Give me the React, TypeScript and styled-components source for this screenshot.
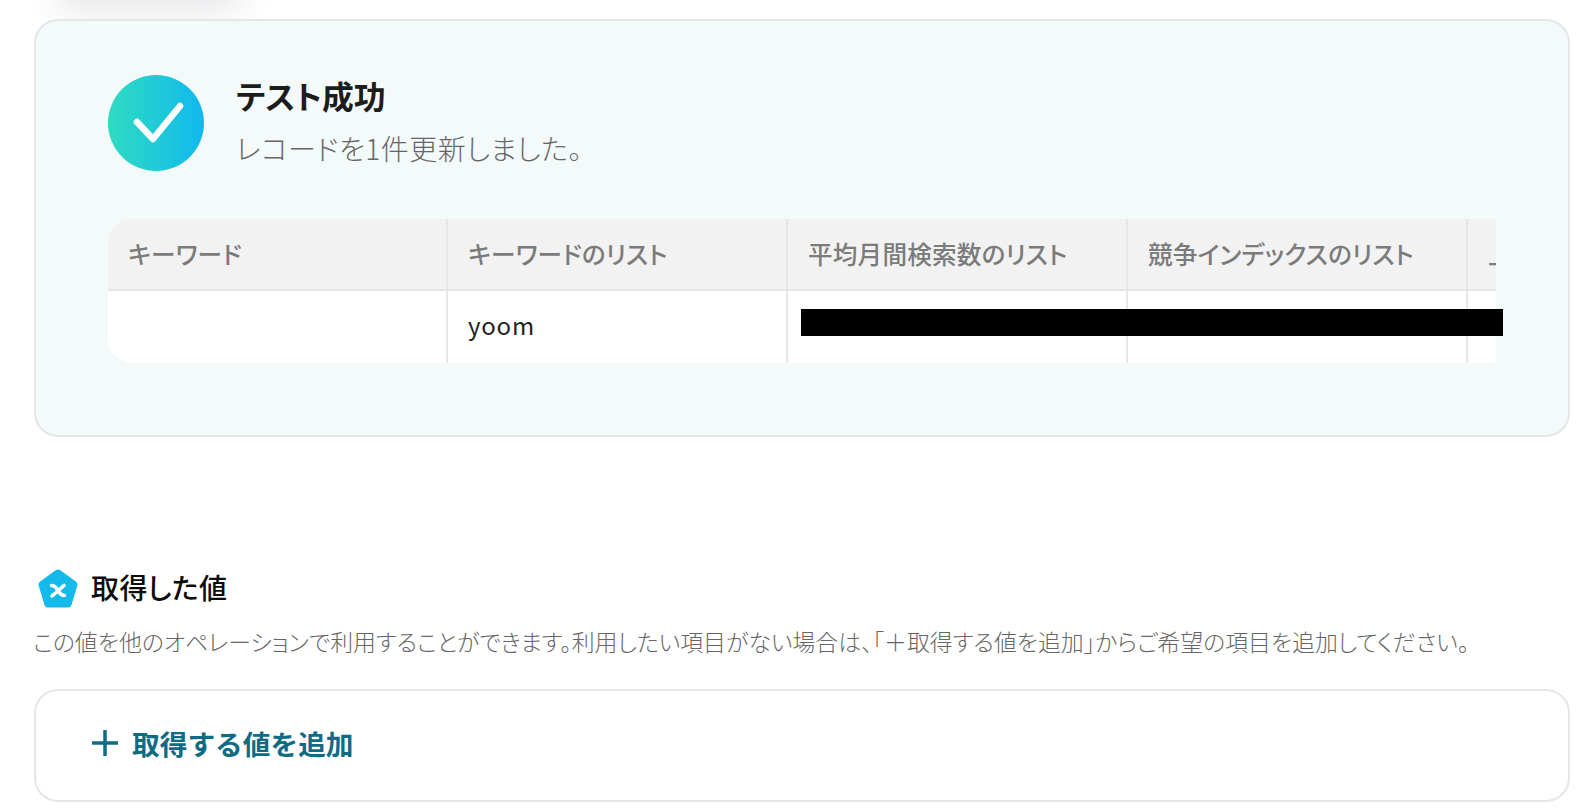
import { createGlobalStyle } from 'styled-components'
import styled from 'styled-components'

const GlobalStyle = createGlobalStyle`
  html, body {
    margin: 0;
    padding: 0;
    background: #ffffff;
  }
  body {
    font-family: "Noto Sans CJK JP", "Noto Sans", sans-serif;
    overflow: hidden;
  }
`

const columns = [
  { title: 'キーワード', value: '' },
  { title: 'キーワードのリスト', value: 'yoom' },
  { title: '平均月間検索数のリスト', value: '' },
  { title: '競争インデックスのリスト', value: '' },
  { title: '上', value: '' },
]

function CheckBadge() {
  return (
    <svg width="96" height="96" viewBox="0 0 96 96">
      <defs>
        <linearGradient id="badge" x1="0" y1="0" x2="1" y2="0">
          <stop offset="0" stopColor="#2fdcc0" />
          <stop offset="1" stopColor="#10b9ee" />
        </linearGradient>
      </defs>
      <circle cx="48" cy="48" r="48" fill="url(#badge)" />
      <path
        d="M29 47 L45 64 L72 31"
        fill="none"
        stroke="#fff"
        strokeWidth="6.5"
        strokeLinecap="round"
        strokeLinejoin="round"
      />
    </svg>
  )
}

function PentagonLogo() {
  return (
    <svg width="40" height="40" viewBox="0 0 40 40">
      <path
        d="M17.6 1.2 Q20 -0.2 22.4 1.2 L37.8 12.6 Q40 14.2 39.3 16.8 L33.6 35.8 Q32.8 38.6 30 38.6 L10 38.6 Q7.2 38.6 6.4 35.8 L0.7 16.8 Q0 14.2 2.2 12.6 Z"
        fill="#14bbea"
      />
      <path
        d="M13.5 16.5 C17.5 16.5 18.5 19 20 21.5 C21.5 24 22.5 26.5 26.5 26.5 M26 16.5 L14 27"
        fill="none"
        stroke="#fff"
        strokeWidth="3.6"
        strokeLinecap="round"
      />
    </svg>
  )
}

function PlusIcon() {
  return (
    <svg width="26" height="26" viewBox="0 0 26 26">
      <path d="M0 13 H26 M13 0 V26" stroke="#0f6b84" strokeWidth="3.5" fill="none" />
    </svg>
  )
}

export default function App() {
  return (
    <Page>
      <GlobalStyle />
      <TopShade>
        <ShadeBlob />
      </TopShade>
      <ResultCard>
        <ResultHeader>
          <CheckBadge />
          <ResultText>
            <ResultTitle>テスト成功</ResultTitle>
            <ResultSub>レコードを1件更新しました。</ResultSub>
          </ResultText>
        </ResultHeader>
        <TableWrap>
          <RedactBar />
          <Table>
            {columns.map((col) => (
              <Column key={col.title}>
                <HeadCell>{col.title}</HeadCell>
                <BodyCell>{col.value}</BodyCell>
              </Column>
            ))}
          </Table>
        </TableWrap>
      </ResultCard>
      <ValuesHeading>
        <PentagonLogo />
        <ValuesTitle>取得した値</ValuesTitle>
      </ValuesHeading>
      <ValuesNote>
        この値を他のオペレーションで利用することができます。利用したい項目がない場合は、「＋取得する値を追加」からご希望の項目を追加してください。
      </ValuesNote>
      <AddBox>
        <PlusIcon />
        <AddLabel>取得する値を追加</AddLabel>
      </AddBox>
    </Page>
  )
}

const Page = styled.div`
  width: 1588px;
  height: 812px;
  padding: 0 18px 0 34px;
  box-sizing: border-box;
  overflow: hidden;
  font-feature-settings: 'palt';
`

const TopShade = styled.div`
  height: 19px;
  margin-left: -34px;
  overflow: hidden;
`

const ShadeBlob = styled.div`
  width: 150px;
  height: 10px;
  margin: -16px 0 0 75px;
  background: #e6e7e9;
  box-shadow: 0 0 36px 18px #e6e7e9;
  border-radius: 20px;
`

const ResultCard = styled.section`
  box-sizing: border-box;
  height: 418px;
  padding: 54px 72px 0 72px;
  background: #f4f9fa;
  border: 2px solid #e4e6e8;
  border-radius: 24px;
`

const ResultHeader = styled.div`
  display: flex;
  align-items: center;
  gap: 32px;
`

const ResultText = styled.div`
  display: flex;
  flex-direction: column;
  gap: 11px;
  margin-top: -6px;
`

const ResultTitle = styled.div`
  font-size: 31.8px;
  line-height: 44px;
  font-weight: 700;
  color: #1c1c1c;
`

const ResultSub = styled.div`
  font-size: 28px;
  line-height: 40px;
  letter-spacing: 0.5px;
  font-weight: 300;
  color: #666;
`

const TableWrap = styled.div`
  position: relative;
  margin-top: 48px;
  border-radius: 24px 0 0 24px;
`

const RedactBar = styled.div`
  position: absolute;
  left: 693px;
  top: 90px;
  width: 702px;
  height: 27px;
  background: #000;
  z-index: 1;
`

const Table = styled.div`
  display: flex;
  overflow: hidden;
  border-radius: 24px 0 0 24px;
`

const Column = styled.div`
  flex: 0 0 340px;
  box-sizing: border-box;
  border-right: 2px solid #e4e6e8;
`

const HeadCell = styled.div`
  box-sizing: border-box;
  height: 72px;
  padding: 0 20px 3px;
  display: flex;
  align-items: center;
  background: #f2f2f2;
  border-bottom: 2px solid #e4e6e8;
  font-size: 24.6px;
  letter-spacing: 0.2px;
  font-weight: 500;
  color: #7b7b7b;
  white-space: nowrap;
`

const BodyCell = styled.div`
  box-sizing: border-box;
  height: 72px;
  padding: 0 20px 6px;
  display: flex;
  align-items: center;
  background: #ffffff;
  font-size: 24px;
  letter-spacing: 0.8px;
  color: #222;
`

const ValuesHeading = styled.div`
  display: flex;
  align-items: flex-start;
  gap: 13px;
  margin: 132px 0 0 4px;
`

const ValuesTitle = styled.h2`
  margin: -2px 0 0;
  font-size: 28px;
  line-height: 40px;
  letter-spacing: 0.4px;
  font-weight: 500;
  color: #0c0c0c;
`

const ValuesNote = styled.p`
  margin: 16px 0 0 -1px;
  font-size: 22.9px;
  line-height: 32px;
  font-weight: 300;
  color: #666;
  white-space: nowrap;
`

const AddBox = styled.button`
  box-sizing: border-box;
  width: 100%;
  height: 113px;
  margin-top: 32px;
  padding: 0 0 5px 56px;
  display: flex;
  align-items: center;
  gap: 14px;
  background: #fff;
  border: 2px solid #e4e6e8;
  border-radius: 24px;
  font-family: inherit;
`

const AddLabel = styled.span`
  font-size: 27.7px;
  font-weight: 700;
  color: #0f6b84;
`
